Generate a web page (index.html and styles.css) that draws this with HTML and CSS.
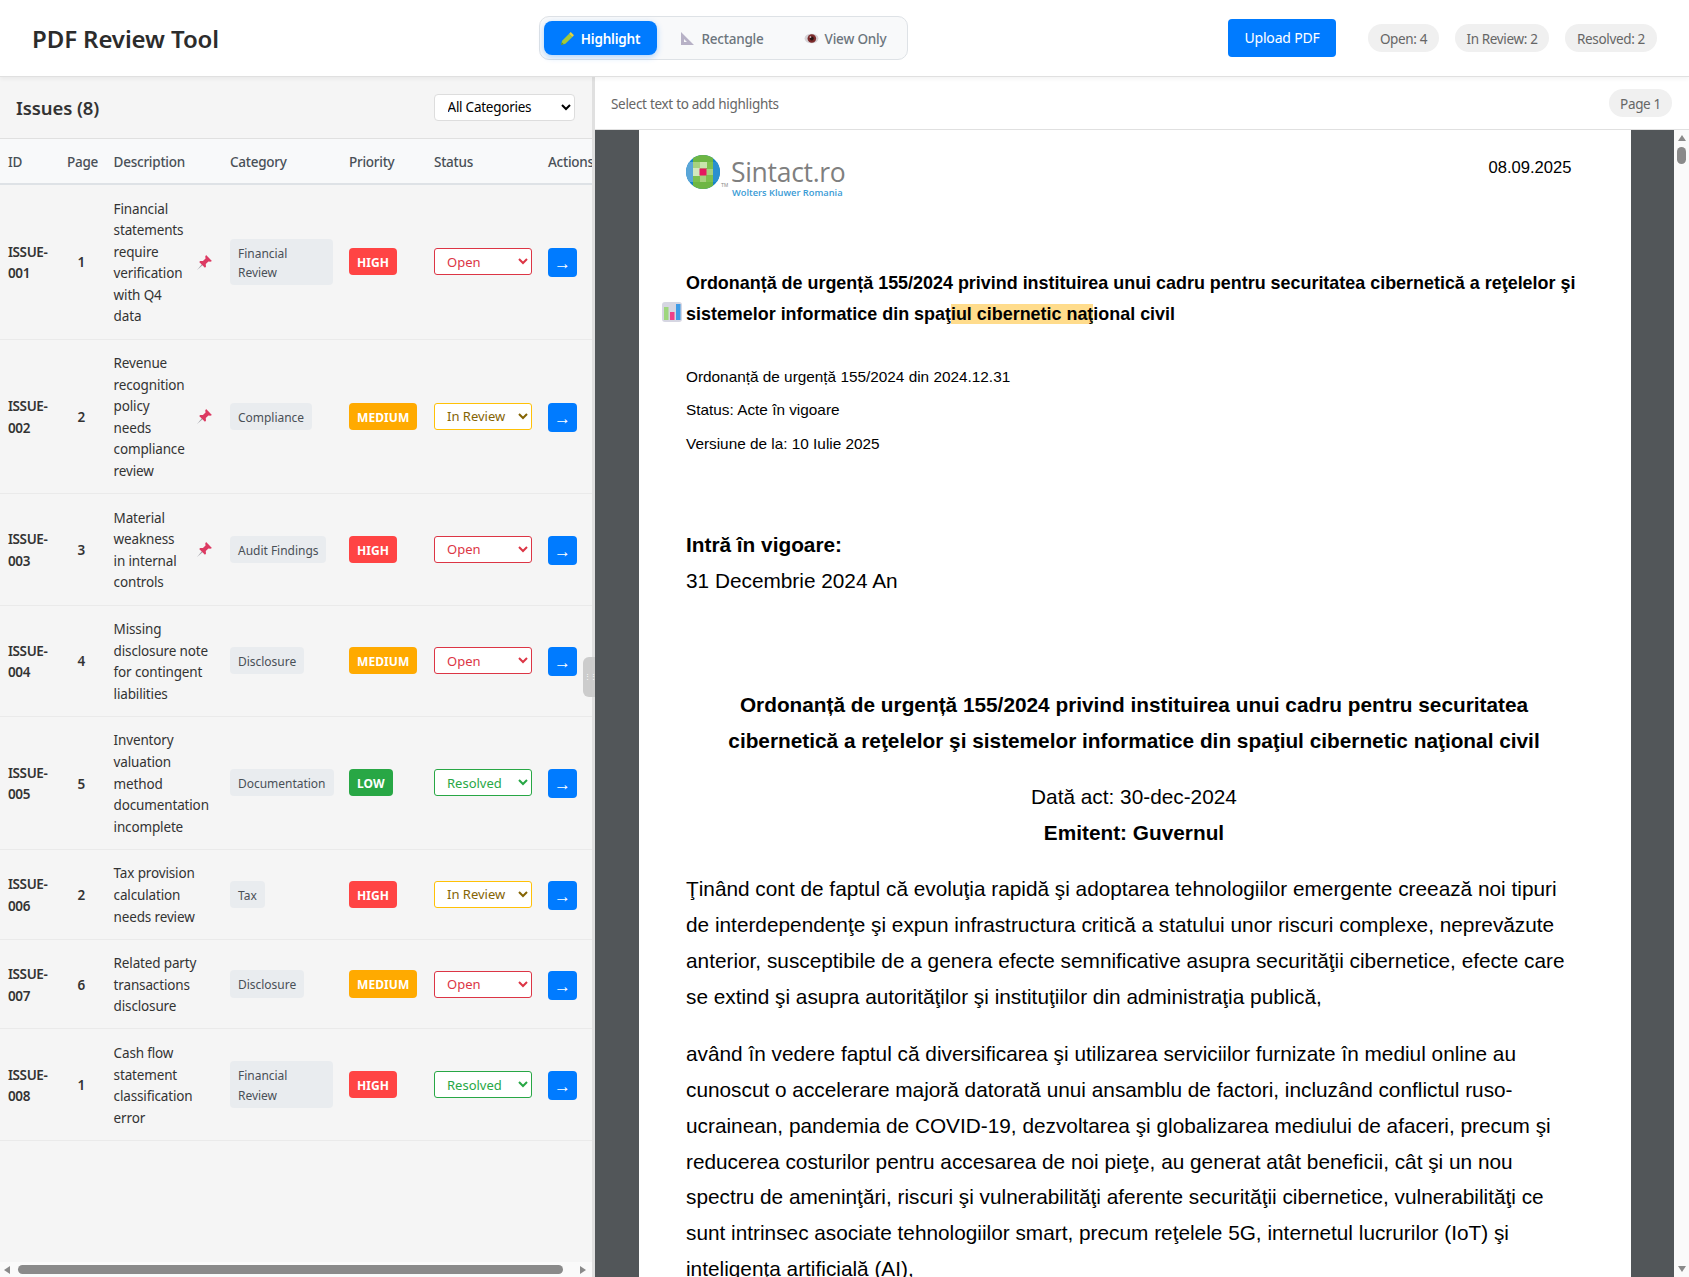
FILE: index.html
```html
<!DOCTYPE html>
<html lang="en">
<head>
<meta charset="utf-8">
<title>PDF Review Tool</title>
<link rel="stylesheet" href="styles.css">
</head>
<body>
<div class="app">
  <header class="topbar">
    <h1 class="brand">PDF Review Tool</h1>
    <div class="modes">
      <button class="mode mode-highlight active">
        <svg class="mode-icon" viewBox="0 0 14 14"><path d="M1 13l1-4 6.500-6.500 3 3L5 12z" fill="#a4c93a"/><path d="M8.500 2.500l1.500-1.500 3 3-1.500 1.500z" fill="#e6d23c"/><path d="M1 13l.6-2.600 2 2z" fill="#4a8f3c"/></svg>
        <span>Highlight</span>
      </button>
      <button class="mode mode-rect">
        <svg class="mode-icon" viewBox="0 0 15 15"><path fill-rule="evenodd" d="M1 1l13 13H1zM4 8v3h3z" fill="#b7b1c6"/></svg>
        <span>Rectangle</span>
      </button>
      <button class="mode mode-view">
        <svg class="mode-icon" viewBox="0 0 14 14"><ellipse cx="7" cy="7" rx="6.500" ry="4.500" fill="#d5d2d6"/><circle cx="7.300" cy="7" r="4" fill="#7c2b2b"/><circle cx="7.300" cy="7" r="1.800" fill="#2a1414"/><circle cx="6" cy="5.600" r=".8" fill="#e8d8d8"/></svg>
        <span>View Only</span>
      </button>
    </div>
    <div class="top-right">
      <button class="upload">Upload PDF</button>
      <div class="stats">
        <span class="pill stat-open">Open: 4</span>
        <span class="pill stat-review">In Review: 2</span>
        <span class="pill stat-resolved">Resolved: 2</span>
      </div>
    </div>
  </header>

  <main class="workspace">
    <aside class="sidebar">
      <div class="side-head">
        <h2 class="side-title">Issues (8)</h2>
        <select class="filter"><option>All Categories</option></select>
      </div>
      <div class="table-wrap">
        <table class="issues">
          <colgroup><col class="c-id"><col class="c-page"><col class="c-desc"><col class="c-cat"><col class="c-pri"><col class="c-status"><col class="c-act"></colgroup>
          <thead><tr><th>ID</th><th>Page</th><th>Description</th><th>Category</th><th>Priority</th><th>Status</th><th>Actions</th></tr></thead>
          <tbody>
            <tr>
              <td class="id">ISSUE-<br>001</td><td class="pg">1</td>
              <td class="tx"><div class="desc"><span>Financial<br>statements<br>require<br>verification<br>with Q4<br>data</span><svg class="pin" viewBox="0 0 16 16"><path d="M1 15l5.500-6.500 1 1z" fill="#9a9aa2"/><path d="M9.500 1l5.500 5.500-1.500.8-1.800-.3-2.500 2.500.2 2.500-1 1L3 7.500l1-1 2.500.2L9 4.200l-.3-1.800z" fill="#dc3a62"/></svg></div></td>
              <td><span class="cat">Financial Review</span></td><td><span class="pri high">HIGH</span></td>
              <td><select class="st st-open"><option>Open</option></select></td><td class="act"><button class="go">→</button></td>
            </tr>
            <tr>
              <td class="id">ISSUE-<br>002</td><td class="pg">2</td>
              <td class="tx"><div class="desc"><span>Revenue<br>recognition<br>policy<br>needs<br>compliance<br>review</span><svg class="pin" viewBox="0 0 16 16"><path d="M1 15l5.500-6.500 1 1z" fill="#9a9aa2"/><path d="M9.500 1l5.500 5.500-1.500.8-1.800-.3-2.500 2.500.2 2.500-1 1L3 7.500l1-1 2.500.2L9 4.200l-.3-1.800z" fill="#dc3a62"/></svg></div></td>
              <td><span class="cat">Compliance</span></td><td><span class="pri medium">MEDIUM</span></td>
              <td><select class="st st-review"><option>In Review</option></select></td><td class="act"><button class="go">→</button></td>
            </tr>
            <tr>
              <td class="id">ISSUE-<br>003</td><td class="pg">3</td>
              <td class="tx"><div class="desc"><span>Material<br>weakness<br>in internal<br>controls</span><svg class="pin" viewBox="0 0 16 16"><path d="M1 15l5.500-6.500 1 1z" fill="#9a9aa2"/><path d="M9.500 1l5.500 5.500-1.500.8-1.800-.3-2.500 2.500.2 2.500-1 1L3 7.500l1-1 2.500.2L9 4.200l-.3-1.800z" fill="#dc3a62"/></svg></div></td>
              <td><span class="cat">Audit Findings</span></td><td><span class="pri high">HIGH</span></td>
              <td><select class="st st-open"><option>Open</option></select></td><td class="act"><button class="go">→</button></td>
            </tr>
            <tr>
              <td class="id">ISSUE-<br>004</td><td class="pg">4</td>
              <td class="tx"><div class="desc"><span>Missing<br>disclosure note<br>for contingent<br>liabilities</span></div></td>
              <td><span class="cat">Disclosure</span></td><td><span class="pri medium">MEDIUM</span></td>
              <td><select class="st st-open"><option>Open</option></select></td><td class="act"><button class="go">→</button></td>
            </tr>
            <tr>
              <td class="id">ISSUE-<br>005</td><td class="pg">5</td>
              <td class="tx"><div class="desc"><span>Inventory<br>valuation<br>method<br>documentation<br>incomplete</span></div></td>
              <td><span class="cat">Documentation</span></td><td><span class="pri low">LOW</span></td>
              <td><select class="st st-resolved"><option>Resolved</option></select></td><td class="act"><button class="go">→</button></td>
            </tr>
            <tr>
              <td class="id">ISSUE-<br>006</td><td class="pg">2</td>
              <td class="tx"><div class="desc"><span>Tax provision<br>calculation<br>needs review</span></div></td>
              <td><span class="cat">Tax</span></td><td><span class="pri high">HIGH</span></td>
              <td><select class="st st-review"><option>In Review</option></select></td><td class="act"><button class="go">→</button></td>
            </tr>
            <tr>
              <td class="id">ISSUE-<br>007</td><td class="pg">6</td>
              <td class="tx"><div class="desc"><span>Related party<br>transactions<br>disclosure</span></div></td>
              <td><span class="cat">Disclosure</span></td><td><span class="pri medium">MEDIUM</span></td>
              <td><select class="st st-open"><option>Open</option></select></td><td class="act"><button class="go">→</button></td>
            </tr>
            <tr>
              <td class="id">ISSUE-<br>008</td><td class="pg">1</td>
              <td class="tx"><div class="desc"><span>Cash flow<br>statement<br>classification<br>error</span></div></td>
              <td><span class="cat">Financial Review</span></td><td><span class="pri high">HIGH</span></td>
              <td><select class="st st-resolved"><option>Resolved</option></select></td><td class="act"><button class="go">→</button></td>
            </tr>
          </tbody>
        </table>
      </div>
      <div class="hbar"><i class="arrow a-left"></i><i class="hthumb"></i><i class="arrow a-right"></i></div>
    </aside>
    <div class="resizer"><div class="handle">⋮⋮</div></div>

    <section class="viewer">
      <div class="viewer-bar">
        <span class="hint">Select text to add highlights</span>
        <span class="pill page-pill">Page 1</span>
      </div>
      <div class="viewer-body">
        <div class="canvas">
          <article class="sheet">
            <div class="doc-top">
              <div class="logo">
                <svg class="logo-mark" viewBox="0 0 34 34">
                  <defs><clipPath id="globe"><circle cx="17" cy="17" r="17"/></clipPath></defs>
                  <g clip-path="url(#globe)">
                    <rect width="34" height="34" fill="#1585c6"/>
                    <rect x="7" y="0" width="20" height="34" fill="#6db644"/>
                    <rect x="0" y="7" width="7" height="20" fill="#5aa6d8"/>
                    <rect x="27" y="7" width="7" height="20" fill="#2a90cf"/>
                    <rect x="7" y="7" width="20" height="20" fill="#a6d17f"/>
                    <rect x="20" y="7" width="7" height="7" fill="#7cc04e"/>
                    <rect x="7" y="20" width="7" height="7" fill="#7cc04e"/>
                    <rect x="20" y="20" width="7" height="7" fill="#7cc04e"/>
                    <rect x="14" y="7" width="7" height="6" fill="#c9e4ac"/>
                    <rect x="7" y="13" width="7" height="8" fill="#d3e8bd"/>
                    <rect x="13.500" y="13.500" width="7" height="7" fill="#e5175f"/>
                  </g>
                </svg>
                <span class="tm">TM</span>
                <div class="logo-text">
                  <span class="logo-name">Sintact.ro</span>
                  <span class="logo-sub">Wolters Kluwer Romania</span>
                </div>
              </div>
              <div class="doc-date">08.09.2025</div>
            </div>

            <div class="doc-title">
              <svg class="note-mark" viewBox="0 0 20 20"><rect width="20" height="20" rx="3" fill="#d6d6e2"/><rect x="2" y="5" width="4.500" height="13" fill="#9ed67e"/><rect x="8" y="10" width="4.500" height="8" fill="#ee3f8a"/><rect x="14" y="2" width="4.500" height="16" fill="#3f9be6"/></svg>
              Ordonanță de urgență 155/2024 privind instituirea unui cadru pentru securitatea cibernetică a reţelelor şi<br>
              sistemelor informatice din spaţ<mark class="hl">iul cibernetic naţ</mark>ional civil
            </div>

            <div class="doc-meta">
              Ordonanță de urgență 155/2024 din 2024.12.31<br>
              Status: Acte în vigoare<br>
              Versiune de la: 10 Iulie 2025
            </div>

            <div class="doc-force">
              <strong>Intră în vigoare:</strong><br>
              31 Decembrie 2024 An
            </div>

            <div class="doc-center doc-main">
              <strong>Ordonanță de urgență 155/2024 privind instituirea unui cadru pentru securitatea<br>
              cibernetică a reţelelor şi sistemelor informatice din spaţiul cibernetic naţional civil</strong>
            </div>
            <div class="doc-center doc-act">
              Dată act: 30-dec-2024<br>
              <strong>Emitent: Guvernul</strong>
            </div>

            <p class="doc-par">
              Ţinând cont de faptul că evoluţia rapidă şi adoptarea tehnologiilor emergente creează noi tipuri<br>
              de interdependenţe şi expun infrastructura critică a statului unor riscuri complexe, neprevăzute<br>
              anterior, susceptibile de a genera efecte semnificative asupra securităţii cibernetice, efecte care<br>
              se extind şi asupra autorităţilor şi instituţiilor din administraţia publică,
            </p>
            <p class="doc-par">
              având în vedere faptul că diversificarea şi utilizarea serviciilor furnizate în mediul online au<br>
              cunoscut o accelerare majoră datorată unui ansamblu de factori, incluzând conflictul ruso-<br>
              ucrainean, pandemia de COVID-19, dezvoltarea şi globalizarea mediului de afaceri, precum şi<br>
              reducerea costurilor pentru accesarea de noi pieţe, au generat atât beneficii, cât şi un nou<br>
              spectru de ameninţări, riscuri şi vulnerabilităţi aferente securităţii cibernetice, vulnerabilităţi ce<br>
              sunt intrinsec asociate tehnologiilor smart, precum reţelele 5G, internetul lucrurilor (IoT) şi<br>
              inteligenţa artificială (AI),
            </p>
          </article>
        </div>
        <div class="vbar"><i class="arrow a-up"></i><i class="vthumb"></i><span class="vspace"></span><i class="arrow a-down"></i></div>
      </div>
    </section>
  </main>
</div>
</body>
</html>
```
FILE: styles.css
```css
* { box-sizing: border-box; }
html, body { margin: 0; height: 100%; overflow: hidden; }
body { font-family: "Noto Sans", "Open Sans", sans-serif; color: #333; background: #fff; }
button, select { font-family: inherit; }

.app { display: flex; flex-direction: column; height: 1277px; }

.topbar { height: 77px; flex: none; display: flex; align-items: center; padding: 0 32px; background: #fff; border-bottom: 1px solid #e0e0e0; box-shadow: 0 2px 4px rgba(0,0,0,.05); position: relative; z-index: 2; }
.brand { margin: 1px 0 0; width: 506.500px; flex: none; font-size: 24px; font-weight: 600; color: #2c2c2c; letter-spacing: -.1px; }
.modes { width: 369px; height: 44px; flex: none; display: flex; gap: 4px; padding: 4px; background: #f8f9fa; border: 1px solid #dee2e6; border-radius: 10px; }
.mode { flex: none; height: 34px; display: flex; align-items: center; justify-content: center; gap: 6px; border: 0; border-radius: 8px; background: transparent; color: #6c757d; font-size: 13.500px; font-weight: 500; padding: 0; letter-spacing: -.2px; }
.mode span { margin-top: 2px; }
.mode-highlight { width: 113px; }
.mode-rect { width: 123px; }
.mode-view { width: 115px; }
.mode.active { background: #007bff; color: #fff; font-weight: 600; box-shadow: 0 2px 6px rgba(0,123,255,.3); }
.mode-icon { width: 15px; height: 15px; flex: none; }
.top-right { margin-left: auto; display: flex; align-items: center; gap: 32px; }
.upload { width: 108px; height: 38px; border: 0; border-radius: 4px; background: #007bff; color: #fff; font-size: 14px; padding: 0 0 1px; letter-spacing: -.2px; }
.stats { display: flex; gap: 16px; }
.pill { display: inline-flex; align-items: center; justify-content: center; height: 28px; padding-top: 2px; border-radius: 14px; background: #f0f0f0; color: #666; font-size: 13.500px; letter-spacing: -.35px; }
.stat-open { width: 71px; }
.stat-review { width: 94px; }
.stat-resolved { width: 92px; }

.workspace { flex: 1; min-height: 0; display: flex; }

.sidebar { width: 592px; flex: none; display: flex; flex-direction: column; background: #f5f5f5; }
.side-head { height: 62px; flex: none; display: flex; align-items: center; justify-content: space-between; padding: 0 17.500px 0 16px; border-bottom: 1px solid #e0e0e0; }
.side-title { margin: 0; font-size: 18.500px; font-weight: 600; color: #333; letter-spacing: -.1px; }
.filter { width: 141px; height: 27px; border: 1px solid #ddd; border-radius: 4px; background: #fff; color: #000; font-size: 13.500px; letter-spacing: -.25px; padding: 0 4px 0 9px; margin-top: -1px; }

.table-wrap { flex: 1; min-height: 0; overflow: hidden; }
.issues { width: 604px; table-layout: fixed; border-collapse: collapse; font-size: 13.500px; line-height: 21.600px; letter-spacing: -.15px; }
.c-id { width: 59px; }
.c-page { width: 46.600px; }
.c-desc { width: 116.400px; }
.c-cat { width: 119px; }
.c-pri { width: 85px; }
.c-status { width: 114px; }
.c-act { width: 64px; }
.issues th { height: 45px; padding: 4px 8px 0; background: #f8f9fa; border-bottom: 2px solid #dee2e6; text-align: left; font-weight: 500; color: #495057; white-space: nowrap; letter-spacing: -.25px; }
.issues td { padding: 12px 8px; border-bottom: 1px solid #eaeaea; vertical-align: middle; color: #333; }
.issues .id { font-weight: 600; letter-spacing: -.4px; padding-top: 13.500px; padding-bottom: 10.500px; }
.issues .pg { font-weight: 600; text-align: center; padding: 13.500px 10px 10.500px 8px; }
.issues .tx { padding-top: 13.500px; padding-bottom: 10.500px; }
.issues .act { padding-top: 13px; padding-bottom: 11px; }
.desc { display: flex; align-items: center; justify-content: space-between; white-space: nowrap; }
.pin { width: 17px; height: 17px; flex: none; margin: -2px 1px 0 0; }
.cat { display: inline-block; padding: 5px 8px 3px; border-radius: 4px; background: #e9ecef; color: #495057; font-size: 12px; line-height: 19.200px; letter-spacing: -.02px; vertical-align: middle; }
.pri { display: inline-block; padding: 5px 8px 3px; border-radius: 4px; color: #fff; font-size: 12px; font-weight: 700; line-height: 19.200px; letter-spacing: .1px; vertical-align: middle; }
.high { background: #ff4444; }
.medium { background: #ffaa00; }
.low { background: #28a745; }
.st { display: block; width: 98px; height: 27px; padding: 0 0 0 8px; border-radius: 3px; border: 1px solid; background: #fff; font-size: 13px; letter-spacing: 0; }
.st-open { border-color: #dc3545; color: #dc3545; }
.st-review { border-color: #ffc107; color: #856404; }
.st-resolved { border-color: #28a745; color: #28a745; }
.go { display: block; width: 29px; height: 29px; padding: 2px 0 0; border: 0; border-radius: 4px; background: #007bff; color: #fff; font-family: "Liberation Sans", sans-serif; font-size: 17px; line-height: 27px; }

.hbar { height: 15px; flex: none; display: flex; align-items: center; justify-content: space-between; background: #fafafa; padding: 0 6px 0 4px; }
.hthumb { width: 545px; height: 9px; border-radius: 5px; background: #8a8a8a; margin-left: 8px; margin-right: auto; }
.arrow { display: block; width: 0; height: 0; border-style: solid; border-color: transparent; flex: none; }
.a-left { border-width: 4.500px 6px 4.500px 0; border-right-color: #8a8a8a; }
.a-right { border-width: 4.500px 0 4.500px 6px; border-left-color: #8a8a8a; }
.a-up { border-width: 0 4.500px 6px 4.500px; border-bottom-color: #8a8a8a; }
.a-down { border-width: 6px 4.500px 0 4.500px; border-top-color: #8a8a8a; }

.resizer { width: 3px; flex: none; background: #e0e0e0; position: relative; }
.handle { position: absolute; right: 0; top: 580px; width: 12px; height: 40px; border-radius: 6px 0 0 6px; background: #ccc; color: #fff; font-size: 7px; line-height: 40px; text-align: right; letter-spacing: -1.500px; }

.viewer { flex: 1; min-width: 0; display: flex; flex-direction: column; }
.viewer-bar { height: 53px; flex: none; display: flex; align-items: center; justify-content: space-between; padding: 0 17px 0 16px; background: #fff; border-bottom: 1px solid #e0e0e0; }
.hint { color: #666; font-size: 13.500px; letter-spacing: -.3px; margin-top: 1px; }
.page-pill { width: 63px; }
.viewer-body { flex: 1; min-height: 0; display: flex; }
.canvas { flex: 1; min-width: 0; overflow: hidden; background: #525659; padding: 0 43px 0 44px; }
.sheet { position: relative; height: 100%; overflow: hidden; background: #fff; padding: 25px 0 0 47px; font-family: "Liberation Sans", Arial, sans-serif; color: #000; white-space: nowrap; }

.vbar { width: 15px; flex: none; display: flex; flex-direction: column; align-items: center; background: #fafafa; padding: 5px 0; }
.vthumb { width: 9px; height: 17px; border-radius: 5px; background: #8a8a8a; margin-top: 6px; }
.vspace { flex: 1; }

.doc-top { height: 46px; display: flex; justify-content: space-between; padding-right: 59.500px; }
.logo { display: flex; align-items: flex-start; }
.logo-mark { width: 34px; height: 34px; flex: none; }
.tm { width: 12px; flex: none; margin-top: 27px; font-size: 5px; color: #888; padding-left: 1px; font-family: "Liberation Sans", sans-serif; }
.logo-text { display: flex; flex-direction: column; margin-left: -1px; }
.logo-name { font-family: "Open Sans", sans-serif; font-size: 26.500px; line-height: 29px; margin-top: 3px; color: #7f7f7f; letter-spacing: -.3px; }
.logo-sub { font-family: "Open Sans", sans-serif; font-size: 9.300px; font-weight: 600; line-height: 12px; margin-left: 1px; color: #3a9bd5; }
.doc-date { font-size: 16.600px; line-height: 20px; margin-top: 3px; }

.doc-title { position: relative; margin-top: 67px; font-size: 17.930px; font-weight: 700; line-height: 31px; }
.note-mark { position: absolute; left: -24px; top: 34px; width: 20px; height: 20px; }
.hl { background: #ffdc8c; color: inherit; }
.doc-meta { margin-top: 30px; font-size: 15.350px; line-height: 33.400px; }
.doc-force { margin-top: 67px; font-size: 20.800px; line-height: 36px; }
.doc-center { text-align: center; font-size: 20.800px; line-height: 36px; width: 896px; }
.doc-main { margin-top: 88px; }
.doc-act { margin-top: 20px; }
.doc-par { margin: 20px 0 0; font-size: 20.800px; line-height: 35.900px; }
.doc-par + .doc-par { margin-top: 21px; }
```
